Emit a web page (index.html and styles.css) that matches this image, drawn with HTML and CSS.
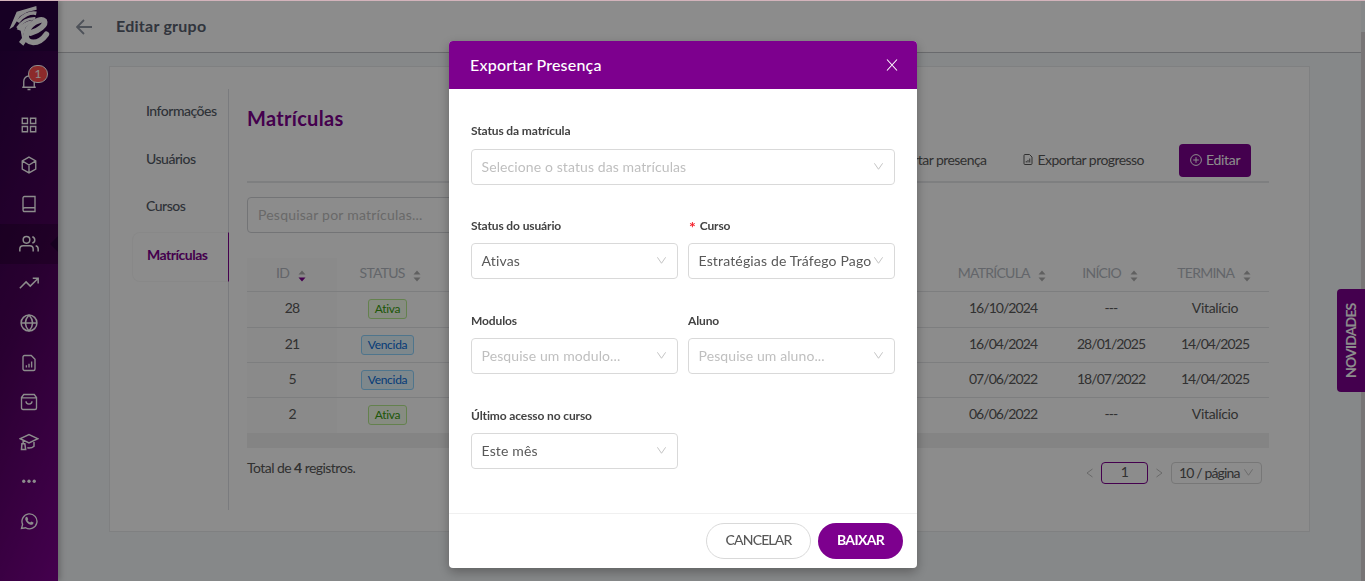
FILE: index.html
```
<!DOCTYPE html>
<html lang="pt-BR">
<head>
  <meta charset="UTF-8" />
  <title>Editar grupo</title>
  <link rel="stylesheet" href="styles.css">
</head>
<body>
  <svg class="defs" width="0" height="0">
    <symbol id="down" viewBox="0 0 12 12"><path d="M1.500 2.500 6 9l4.500-6.500" /></symbol>
    <symbol id="file-chart" viewBox="0 0 24 24"><path d="M6 2h9l5 5v13a2 2 0 0 1-2 2H6a2 2 0 0 1-2-2V4a2 2 0 0 1 2-2zM8.500 18v-3M12 18v-5M15.500 18v-8" /></symbol>
    <symbol id="sort" viewBox="0 0 8 12"><path class="up" d="M4 0.500 7.500 4.500h-7z" /><path class="dn" d="M4 11.500 7.500 7.500h-7z" /></symbol>
  </svg>

  <div class="layout">
    <nav class="sidebar">
      <div class="logo">
        <svg width="58" height="50" viewBox="0 0 174 150">
          <path d="M28 88 50 35 109 18 110 29 82 36 60 49 40 80z" fill="#fff" />
          <path d="M53 66C68 46 90 36 109 40" fill="none" stroke="#fff" stroke-width="11" />
          <path d="M52 84C66 64 84 54 106 55" fill="none" stroke="#fff" stroke-width="8" />
          <path d="M92 99C116 93 139 74 133 63 122 52 84 72 78 104 76 134 116 136 139 103" fill="none" stroke="#fff" stroke-width="17" stroke-linecap="round" />
          <path d="M50 88C58 76 80 62 98 60L76 84 70 104 80 122 70 137 57 126 66 114 62 92z" fill="#fff" />
        </svg>
      </div>
      <div class="nav-item bell">
        <svg viewBox="0 0 24 24"><path d="M3 19h18M5 19v-8a7 7 0 0 1 14 0v8M12 4V2M10 22h4" /></svg>
        <span class="badge">1</span>
      </div>
      <div class="nav-item"><svg viewBox="0 0 24 24"><path d="M3 3h7v7H3zM14 3h7v7h-7zM3 14h7v7H3zM14 14h7v7h-7z" /></svg></div>
      <div class="nav-item"><svg viewBox="0 0 24 24"><path d="M12 1.500 21 6.500v11l-9 5-9-5v-11zM3 6.500l9 5.500 9-5.500M12 12v10" /></svg></div>
      <div class="nav-item"><svg viewBox="0 0 24 24"><path d="M4 19.500V4a2 2 0 0 1 2-2h14v20H6.500a2.500 2.500 0 0 1 0-5H20" /></svg></div>
      <div class="nav-item active"><svg class="wide" viewBox="0 0 24 24"><path d="M1 21v-3a4 4 0 0 1 4-4h8a4 4 0 0 1 4 4v3M23 21v-3a4 4 0 0 0-3-3.800M16 3.200a4 4 0 0 1 0 7.700" /><circle cx="9" cy="7" r="4" /></svg></div>
      <div class="nav-item"><svg class="wide" viewBox="0 0 24 24"><path d="M1 17 8.500 9.500l5 5L23 5M16.500 5H23v6.500" /></svg></div>
      <div class="nav-item"><svg class="wide" viewBox="0 0 24 24"><circle cx="12" cy="12" r="9.500" /><path d="M2.500 12h19M12 2.500c-5.500 6-5.500 13 0 19M12 2.500c5.500 6 5.500 13 0 19" /></svg></div>
      <div class="nav-item"><svg viewBox="0 0 24 24"><use href="#file-chart" /></svg></div>
      <div class="nav-item"><svg viewBox="0 0 24 24"><path d="M2 6l3-4h14l3 4v14a2 2 0 0 1-2 2H4a2 2 0 0 1-2-2zM2 6.500h20M8 11c0 5 8 5 8 0" /></svg></div>
      <div class="nav-item"><svg class="wide" viewBox="0 0 24 24"><path d="M1.500 8 12 3l10.500 5L12 13zM18 10.500v6.500c-2 2-5 2.500-8 2M5 10v4M3.500 14h3.500l1 7H3z" /></svg></div>
      <div class="nav-item"><svg viewBox="0 0 24 24"><g class="solid"><circle cx="5" cy="11" r="2.200" /><circle cx="12" cy="11" r="2.200" /><circle cx="19" cy="11" r="2.200" /></g></svg></div>
      <div class="nav-item"><svg viewBox="0 0 24 24"><path d="M2 22l1.500-5.500A10 10 0 1 1 7.500 21z" /><path class="solid" d="M8 6.500 9.500 6.300 11 9.500 10 11c1 1.500 2 2.500 3.500 3l1.500-1.500 3 1.500c0 2.500-2 3.500-4 3-3.500-1-6-3.500-7-7 0-1.500 0-2.500 1-3.500z" /></svg></div>
    </nav>

    <main class="main">
      <header class="topbar">
        <svg class="back" width="16" height="16" viewBox="0 0 16 16"><path d="M16 8H1.500M8 1 1 8l7 7" /></svg>
        <h1>Editar grupo</h1>
      </header>

      <section class="card">
        <ul class="tabs">
          <li>Informações</li>
          <li>Usuários</li>
          <li>Cursos</li>
          <li class="active">Matrículas</li>
        </ul>

        <div class="content">
          <h2>Matrículas</h2>
          <div class="toolbar">
            <span class="action"><svg width="12" height="13"><use href="#file-chart" /></svg>Exportar presença</span>
            <span class="action"><svg width="12" height="13"><use href="#file-chart" /></svg>Exportar progresso</span>
            <button class="edit"><svg width="12" height="12" viewBox="0 0 12 12"><circle cx="6" cy="6" r="5.400" /><path d="M6 3.200v5.600M3.200 6h5.600" /></svg>Editar</button>
          </div>
          <input class="search" type="text" placeholder="Pesquisar por matrículas..." />

          <table>
            <colgroup><col class="c-id"><col class="c-status"><col><col class="c-date"><col class="c-start"><col class="c-end"></colgroup>
            <thead>
              <tr>
                <th class="id">ID <svg class="sort desc"><use href="#sort" /></svg></th>
                <th class="status">STATUS <svg class="sort"><use href="#sort" /></svg></th>
                <th></th>
                <th>MATRÍCULA <svg class="sort"><use href="#sort" /></svg></th>
                <th>INÍCIO <svg class="sort"><use href="#sort" /></svg></th>
                <th>TERMINA <svg class="sort"><use href="#sort" /></svg></th>
              </tr>
            </thead>
            <tbody>
              <tr class="first"><td class="id">28</td><td><span class="tag green">Ativa</span></td><td></td><td>16/10/2024</td><td>---</td><td class="word">Vitalício</td></tr>
              <tr><td class="id">21</td><td><span class="tag blue">Vencida</span></td><td></td><td>16/04/2024</td><td>28/01/2025</td><td>14/04/2025</td></tr>
              <tr><td class="id">5</td><td><span class="tag blue">Vencida</span></td><td></td><td>07/06/2022</td><td>18/07/2022</td><td>14/04/2025</td></tr>
              <tr><td class="id">2</td><td><span class="tag green">Ativa</span></td><td></td><td>06/06/2022</td><td>---</td><td class="word">Vitalício</td></tr>
            </tbody>
          </table>
          <div class="scroll-x"></div>

          <div class="table-footer">
            <p>Total de <b>4</b> registros.</p>
            <div class="pagination">
              <svg width="7" height="10" viewBox="0 0 7 10"><path d="M6.500 1 1 5l5.500 4" /></svg>
              <span class="page">1</span>
              <svg width="7" height="10" viewBox="0 0 7 10"><path d="M0.500 1 6 5 0.500 9" /></svg>
              <span class="page-size">10 / página <svg class="arrow"><use href="#down" /></svg></span>
            </div>
          </div>
        </div>
      </section>
    </main>
    <div class="scrollbar"></div>
  </div>

  <div class="news">NOVIDADES</div>

  <div class="mask">
    <div class="modal">
      <div class="modal-header">
        <h3>Exportar Presença</h3>
        <svg width="12" height="12" viewBox="0 0 12 12"><path d="M1 0.500 11 11.500M11 0.500 1 11.500" /></svg>
      </div>
      <form class="modal-body">
        <div class="field full">
          <label>Status da matrícula</label>
          <div class="select empty">Selecione o status das matrículas<svg class="arrow"><use href="#down" /></svg></div>
        </div>
        <div class="field">
          <label>Status do usuário</label>
          <div class="select">Ativas<svg class="arrow"><use href="#down" /></svg></div>
        </div>
        <div class="field">
          <label class="required">Curso</label>
          <div class="select">Estratégias de Tráfego Pago<svg class="arrow"><use href="#down" /></svg></div>
        </div>
        <div class="field">
          <label>Modulos</label>
          <div class="select empty">Pesquise um modulo...<svg class="arrow"><use href="#down" /></svg></div>
        </div>
        <div class="field">
          <label>Aluno</label>
          <div class="select empty">Pesquise um aluno...<svg class="arrow"><use href="#down" /></svg></div>
        </div>
        <div class="field">
          <label>Último acesso no curso</label>
          <div class="select">Este mês<svg class="arrow"><use href="#down" /></svg></div>
        </div>
      </form>
      <div class="modal-footer">
        <button class="cancel">CANCELAR</button>
        <button class="download">BAIXAR</button>
      </div>
    </div>
  </div>
  <div class="topline"></div>
</body>
</html>
```
FILE: styles.css
```
* {
  box-sizing: border-box;
}

body {
  margin: 0;
  height: 581px;
  overflow: hidden;
  font-family: Lato, sans-serif;
  font-size: 14px;
  color: #595959;
  background: #f4f7f9;
}

h1, h2, h3, p, ul {
  margin: 0;
  padding: 0;
}

svg {
  fill: none;
  stroke: currentColor;
  flex-shrink: 0;
}

button {
  font-family: inherit;
  cursor: pointer;
}

.defs {
  position: absolute;
}

.layout {
  display: flex;
  height: 581px;
}

/* sidebar */
.sidebar {
  width: 58px;
  flex-shrink: 0;
  background: linear-gradient(115deg, #280040 0%, #4b0059 50%, #7d008e 100%);
  box-shadow: 2px 0 6px rgba(0, 0, 0, 0.25);
  color: #fff;
  z-index: 1;
}

.logo {
  height: 51px;
  background: #2a0042;
}

.logo svg {
  stroke: none;
}

.nav-item {
  height: 39.6px;
  display: flex;
  align-items: center;
  justify-content: center;
  position: relative;
}

.nav-item svg {
  width: 18px;
  height: 18px;
  stroke-width: 1.8;
}

.nav-item svg.wide {
  width: 20px;
  height: 20px;
}

.nav-item .solid {
  fill: #fff;
  stroke: none;
}

.nav-item.bell {
  height: 54.4px;
}

.nav-item.bell svg {
  margin-top: 8px;
}

.badge {
  position: absolute;
  left: 28px;
  top: 14px;
  width: 20px;
  height: 18px;
  line-height: 16px;
  border: 1px solid #fff;
  border-radius: 9px;
  background: #ff4d4f;
  font-size: 12px;
  text-align: center;
}

.nav-item.active {
  background: rgba(0, 0, 0, 0.2);
}

.nav-item.active::after {
  content: "";
  position: absolute;
  right: 0;
  border: 8px solid transparent;
  border-right-color: #28003a;
  border-left: 0;
}

/* page */
.main {
  flex: 1;
}

.topbar {
  height: 53px;
  display: flex;
  align-items: center;
  gap: 24px;
  padding-left: 18px;
  background: #fff;
  border-bottom: 1px solid #c0c2c6;
  color: #8f96a3;
}

.back {
  stroke-width: 1.8;
  margin-top: 1px;
}

.topbar h1 {
  margin-top: -1px;
  font-size: 16px;
  font-weight: 700;
  letter-spacing: 0.25px;
  color: #596270;
}

.card {
  display: flex;
  width: 1201px;
  height: 466px;
  margin: 13px 0 0 51px;
  padding: 22px 40px 21px 22px;
  background: #fff;
  border: 1px solid #e8eaec;
}

.tabs {
  width: 97px;
  list-style: none;
  border-right: 1px solid #dfe1e5;
  font-weight: 500;
  letter-spacing: -0.5px;
  color: #555b66;
}

.tabs li {
  height: 47.5px;
  line-height: 44px;
  padding-left: 14px;
}

.tabs li.active {
  height: 50px;
  line-height: 44px;
  margin-right: -1px;
  border: 1px solid #f7f7f7;
  border-right: 1px solid #7d008e;
  border-radius: 8px 0 0 8px;
  color: #7d008e;
  font-weight: 700;
}

.content {
  flex: 1;
  padding-left: 18px;
  letter-spacing: -0.55px;
}

.content h2 {
  height: 55px;
  padding-top: 17px;
  font-size: 20px;
  line-height: 24px;
  letter-spacing: 0.3px;
  color: #7d008e;
}

.toolbar {
  height: 39px;
  display: flex;
  justify-content: flex-end;
  align-items: flex-start;
  gap: 36px;
  padding-right: 18px;
  border-bottom: 2px solid #e6e7ea;
}

.action {
  display: flex;
  align-items: center;
  gap: 3px;
  height: 31px;
}

.action svg {
  stroke-width: 2;
}

.edit {
  display: flex;
  align-items: center;
  gap: 4px;
  width: 72px;
  height: 33px;
  margin-left: -1px;
  padding: 0 11px 2px;
  border: 0;
  border-radius: 4px;
  background: #7d008e;
  color: #fff;
  font-size: 14px;
  letter-spacing: -0.3px;
}

.search {
  display: block;
  width: 400px;
  height: 36px;
  margin: 14px 0 25px;
  padding: 0 10px 2px;
  border: 1px solid #d2d4d8;
  border-radius: 4px;
  font: inherit;
  letter-spacing: 0.22px;
}

.search::placeholder {
  color: #bfbfbf;
}

table {
  width: 100%;
  table-layout: fixed;
  border-spacing: 0;
  text-align: center;
}

.c-id { width: 90px; }
.c-status { width: 101px; }
.c-date { width: 116px; }
.c-start { width: 100px; }
.c-end { width: 108px; }

th, td {
  height: 35px;
  padding: 0 0 4px;
  border-bottom: 1px solid #e4e5e8;
}

td {
  letter-spacing: -0.95px;
}

td.word {
  letter-spacing: -0.35px;
}

th {
  height: 34px;
  padding: 0 2px 4px 0;
  font-weight: 400;
  letter-spacing: -0.75px;
  color: #b4b9c1;
}

th.status {
  padding: 0 0 4px 6px;
}

.first td {
  height: 36px;
}

tr:last-child td {
  border-bottom: 0;
}

th.id, td.id {
  background: #fcfcfc;
}

/* the header arrows take their colours from these two variables */
.sort {
  --up: #b0b0b0;
  --dn: #b0b0b0;
  width: 8px;
  height: 12px;
  margin-left: 6px;
  vertical-align: -4px;
  stroke: none;
}

.sort.desc {
  --dn: #7d008e;
}

.up { fill: var(--up); }
.dn { fill: var(--dn); }

.tag {
  display: inline-block;
  height: 20px;
  line-height: 18px;
  margin-top: 3px;
  padding: 0 6px;
  border: 1px solid;
  border-radius: 3px;
  font-size: 12px;
  letter-spacing: -0.3px;
  vertical-align: middle;
}

.tag.green {
  color: #389e0d;
  background: #f6ffed;
  border-color: #b7eb8f;
}

.tag.blue {
  color: #096dd9;
  background: #e6f7ff;
  border-color: #91d5ff;
}

.scroll-x {
  height: 15px;
  background: #f0f0f0;
}

.table-footer {
  display: flex;
  justify-content: space-between;
  padding: 12px 7px 0 0;
}

.table-footer p {
  line-height: 15px;
}

.pagination {
  display: flex;
  align-items: center;
  height: 24px;
  gap: 8px;
  padding-top: 1px;
}

.pagination > svg {
  color: #bfbfbf;
}

.page {
  width: 47px;
  height: 22px;
  line-height: 17px;
  border: 1px solid #7d008e;
  border-radius: 4px;
  text-align: center;
}

.page-size {
  display: flex;
  align-items: center;
  justify-content: space-between;
  width: 91px;
  height: 22px;
  padding: 0 7px 1px;
  border: 1px solid #d9d9d9;
  border-radius: 4px;
  letter-spacing: -0.85px;
  white-space: nowrap;
}

.scrollbar {
  width: 4px;
  height: 549px;
  margin-top: 32px;
  background: #dad6d8;
}

.news {
  position: absolute;
  right: 0;
  top: 289px;
  width: 28px;
  height: 103px;
  line-height: 28px;
  border-radius: 0 4px 4px 0;
  background: #7d008e;
  color: #fff;
  font-weight: 700;
  letter-spacing: -0.85px;
  text-align: center;
  writing-mode: vertical-rl;
  transform: rotate(180deg);
}

/* modal */
.mask {
  position: fixed;
  inset: 0;
  z-index: 10;
  padding-top: 41px;
  background: rgba(0, 0, 0, 0.45);
}

.modal {
  display: flex;
  flex-direction: column;
  width: 468px;
  height: 527px;
  margin-left: 449px;
  border-radius: 4px;
  overflow: hidden;
  background: #fff;
  box-shadow: 0 4px 12px rgba(0, 0, 0, 0.3);
}

.modal-header {
  display: flex;
  align-items: center;
  justify-content: space-between;
  height: 48px;
  padding: 0 19px 0 21px;
  background: #7d008e;
  color: #fff;
}

.modal-header h3 {
  margin-top: -2px;
  font-size: 16px;
  font-weight: 500;
  letter-spacing: 0.2px;
}

.modal-header svg {
  stroke-width: 1.1;
}

.modal-body {
  flex: 1;
  display: grid;
  grid-template-columns: 207px 207px;
  grid-auto-rows: 95px;
  align-content: start;
  column-gap: 10px;
  padding: 31px 22px 0;
}

.field.full {
  grid-column: span 2;
}

.field.full .select {
  margin-top: 1px;
}

.field label {
  display: block;
  height: 28px;
  line-height: 22px;
  font-size: 12px;
  font-weight: 700;
  letter-spacing: -0.12px;
  color: #434343;
}

.required::before {
  content: "*";
  margin: 0 4px 0 1px;
  color: #f5222d;
  font-size: 16px;
  line-height: 0;
  vertical-align: -3px;
}

.select {
  display: flex;
  align-items: center;
  justify-content: space-between;
  height: 36px;
  padding: 0 10px 2px 9.5px;
  border: 1px solid #d9d9d9;
  border-radius: 4px;
  white-space: nowrap;
  letter-spacing: 0.16px;
}

.select.empty {
  color: #bfbfbf;
  letter-spacing: 0.1px;
}

.arrow {
  width: 11px;
  height: 11px;
  color: #bfbfbf;
}

.modal-footer {
  display: flex;
  justify-content: flex-end;
  gap: 7px;
  height: 55px;
  padding: 9px 14px 0 0;
  border-top: 1px solid #f0f0f0;
}

.modal-footer button {
  height: 36px;
  padding: 0 0 3px;
  border-radius: 18px;
  font-size: 14px;
}

.modal-footer .cancel {
  width: 105px;
  border: 1px solid #d9d9d9;
  background: #fff;
  color: #595959;
  font-weight: 500;
  letter-spacing: -0.85px;
}

.modal-footer .download {
  width: 85px;
  border: 0;
  background: #7d008e;
  color: #fff;
  font-weight: 700;
  letter-spacing: -0.65px;
}

.topline {
  position: fixed;
  top: 0;
  left: 0;
  right: 0;
  height: 1px;
  z-index: 20;
  background: #d3b3bb;
}
```
